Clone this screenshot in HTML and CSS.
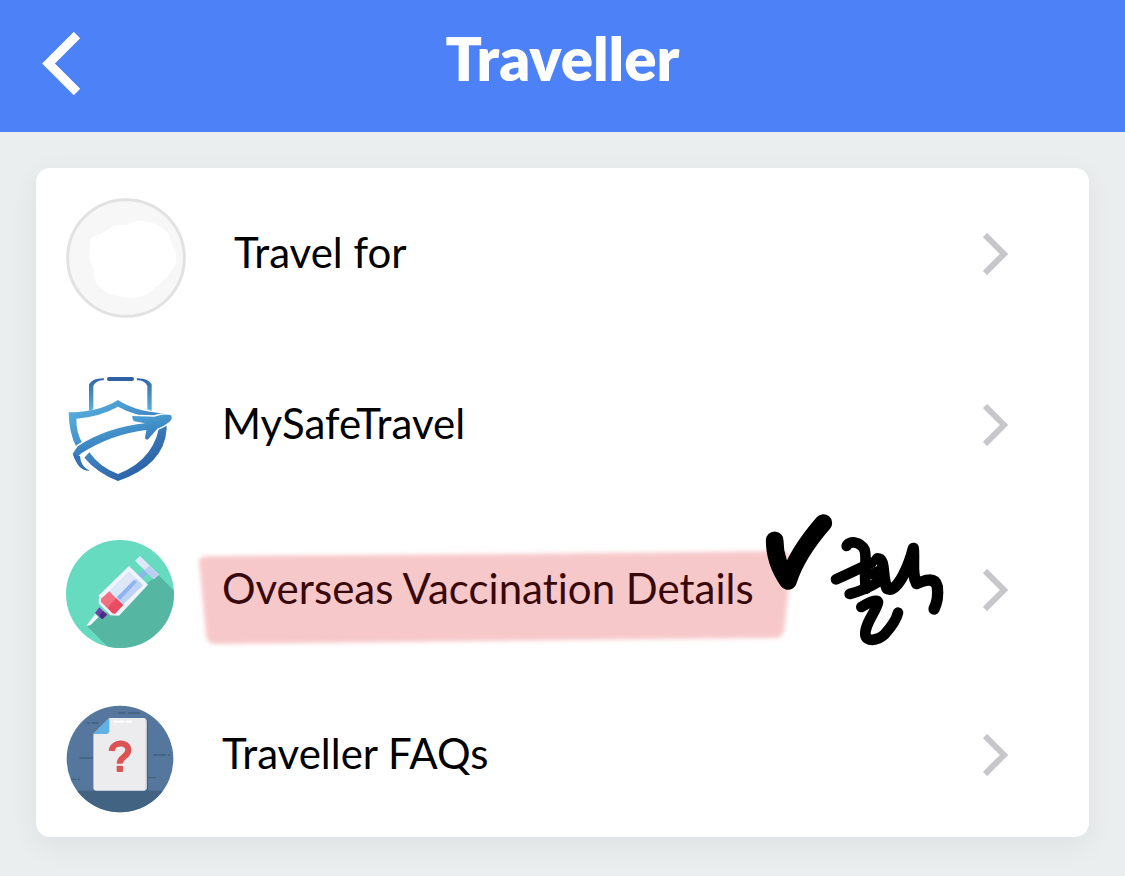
FILE: index.html
```html
<!DOCTYPE html>
<html lang="en">
<head>
  <meta charset="UTF-8">
  <meta name="viewport" content="width=device-width, initial-scale=1">
  <title>Traveller</title>
  <link rel="stylesheet" href="styles.css">
</head>
<body>

  <header class="topbar">
    <button class="back" type="button" aria-label="Back">
      <svg width="40" height="64" viewBox="0 0 40 64">
        <path d="M35 3L6.500 31.500L35 60" fill="none" stroke="#fff" stroke-width="9"/>
      </svg>
    </button>
    <h1 class="title">Traveller</h1>
  </header>

  <main class="content">
    <nav class="card">

      <a class="row" href="#">
        <svg class="icon icon-large" viewBox="48 54 360 360">
          <circle cx="228" cy="234" r="175" fill="#f7f7f7" stroke="#e2e2e2" stroke-width="9"/>
          <path d="M120 184Q125 166 149 163Q166 154 185 140Q205 131 227 136Q240 125 270 123Q325 124 357 164Q365 180 365 192Q380 207 379 248Q374 264 362 274Q351 300 320 318Q301 346 260 353Q230 355 205 348Q165 345 138 309Q130 290 131 267Q120 256 118 230Z" fill="#fff"/>
        </svg>
        <span class="label">Travel for</span>
        <svg class="chevron" viewBox="0 0 26 42"><path d="M2 2L21 21L2 40"/></svg>
      </a>

      <a class="row" href="#">
        <svg class="icon" viewBox="48 45 324 324">
          <defs>
            <linearGradient id="shield" gradientUnits="userSpaceOnUse" x1="100" y1="130" x2="230" y2="360">
              <stop offset="0" stop-color="#55aedd"/>
              <stop offset="1" stop-color="#2c62a8"/>
            </linearGradient>
            <linearGradient id="handle" gradientUnits="userSpaceOnUse" x1="0" y1="52" x2="0" y2="155">
              <stop offset="0" stop-color="#2f62a5"/>
              <stop offset="1" stop-color="#58b4e2"/>
            </linearGradient>
            <linearGradient id="plane" gradientUnits="userSpaceOnUse" x1="200" y1="165" x2="230" y2="290">
              <stop offset="0" stop-color="#4fa8d9"/>
              <stop offset="1" stop-color="#2f6bb0"/>
            </linearGradient>
          </defs>
          <!-- suitcase handle -->
          <rect x="171" y="51" width="81" height="12" rx="6" fill="#2f60a3"/>
          <path d="M117 153V73Q128 54 162 55L161 61Q137 61 130 78V147Z" fill="url(#handle)"/>
          <path d="M305 153V73Q294 54 260 55L261 61Q285 61 292 78V148Z" fill="url(#handle)"/>
          <!-- shield -->
          <path d="M56 157Q145 157 204 120Q260 157 348 160L350 207Q343 315 204 363Q140 338 103 293L118 277Q150 323 204 342Q322 296 331 174Q260 171 204 140Q147 171 79 176Q78 217 98 251L79 261Q57 220 56 157Z" fill="url(#shield)"/>
          <!-- plane and its trail -->
          <path d="M68 281L83 259Q170 202 285 190L253 184Q246 180 247 168L313 170Q342 160 362 165Q370 174 359 185Q342 199 322 206L297 235Q292 243 285 235L289 210Q185 222 94 280Q82 288 78 300Q72 294 68 281Z" fill="url(#plane)" stroke="#fff" stroke-width="9" paint-order="stroke"/>
          <path d="M70 284Q85 334 119 332Q92 320 90 288Z" fill="#3470b4"/>
        </svg>
        <span class="label">MySafeTravel</span>
        <svg class="chevron" viewBox="0 0 26 42"><path d="M2 2L21 21L2 40"/></svg>
      </a>

      <a class="row" href="#">
        <svg class="icon" viewBox="48 45 324 324">
          <clipPath id="disc"><circle cx="210" cy="207" r="162"/></clipPath>
          <g clip-path="url(#disc)">
            <rect x="48" y="45" width="324" height="324" fill="#66dbc0"/>
            <path d="M110 302L325 150L400 225V400H208Z" fill="#55b7a1"/>
          </g>
          <path d="M283 133L293 143L270 168L259 158Z" fill="#8fb5ec"/>
          <path d="M270 93L327 149L311 163L255 107Z" fill="#dfe7fa"/>
          <path d="M299 122L327 149L311 163L283 135Z" fill="#bccff2"/>
          <path d="M237 123L294 179L207 272L181 271L146 235L147 211Z" fill="#f0f4fd"/>
          <path d="M237 139L258 160L198 220L177 199Z" fill="#dce8f7"/>
          <path d="M258 160L279 181L217 241L197 220Z" fill="#bdd3f3"/>
          <path d="M252 164L260 172L210 225L201 216Z" fill="#8fb3ee"/>
          <path d="M178 199L198 220L171 249L153 231V221Z" fill="#ef7181"/>
          <path d="M198 219L220 240L195 267L187 265L171 248Z" fill="#e94c60"/>
          <path d="M148 247L171 269L157 283L135 264Z" fill="#6e43a4"/>
          <path d="M159 258L171 269L157 283L147 273Z" fill="#4e278b"/>
          <path d="M136 267L145 277L121 301L109 302Z" fill="#f4faff"/>
        </svg>
        <span class="label">Overseas Vaccination Details</span>
        <svg class="chevron" viewBox="0 0 26 42"><path d="M2 2L21 21L2 40"/></svg>

        <!-- marker and pen notes drawn over the row -->
        <svg class="marker" viewBox="0 0 610 110">
          <path d="M9 20Q10 16 20 16L310 14L592 11Q601 12 600 20L598 55L594 91Q592 98 585 98L300 101L25 104Q17 104 16 95Z"/>
        </svg>
        <svg class="pen" viewBox="0 0 870 480" role="img" aria-label="클릭">
          <path stroke-width="53" d="M104 121C104 170 121 210 144 243C164 180 210 115 250 69"/>
          <path stroke-width="32" d="M320 138C326 122 360 122 374 150C382 180 370 225 378 266"/>
          <path stroke-width="32" d="M288 238C325 222 360 205 395 188"/>
          <path stroke-width="32" d="M329 282C355 275 385 264 414 246"/>
          <path stroke-width="32" d="M396 222L414 214"/>
          <path stroke-width="34" d="M412 176C438 176 424 225 441 266C475 281 510 185 520 145C524 190 514 222 530 251C550 242 585 228 592 260C595 287 593 306 582 327"/>
          <path stroke-width="32" d="M364 321C381 310 411 295 414 306C412 330 373 370 376 405C379 426 412 423 433 404C453 382 469 361 474 338"/>
        </svg>
      </a>

      <a class="row" href="#">
        <svg class="icon" viewBox="48 45 324 324">
          <clipPath id="faq"><circle cx="210" cy="207" r="160"/></clipPath>
          <g clip-path="url(#faq)">
            <rect x="48" y="45" width="324" height="324" fill="#55779d"/>
            <rect x="48" y="302" width="324" height="70" fill="#426482"/>
            <path d="M204 69H226M233 69H270M109 99H119M124 99H145M88 204H130M309 195H348M353 195H360M292 263H317M63 268H80M84 268H91" fill="none" stroke="#41627f" stroke-width="4"/>
          </g>
          <path d="M178 85H284Q294 86 294 96V295Q293 303 285 303H139Q130 302 130 294V133Z" fill="#3f5f7e"/>
          <path d="M178 84H281Q290 85 290 94V294Q289 302 281 302H139Q130 301 130 293V132Z" fill="#ececee"/>
          <path d="M285 86Q290 88 290 94V294Q289 301 282 302Q286 298 286 292V95Z" fill="#d5d7da"/>
          <path d="M190 95H223M228 95H246" stroke="#fff" stroke-width="5"/>
          <path d="M178 84V124Q177 132 170 132H130Z" fill="#60b1e5"/>
          <path d="M185 183C187 154 235 153 235 180C234 202 209 200 209 221" fill="none" stroke="#dc5354" stroke-width="18"/>
          <rect x="200" y="227" width="19" height="19" rx="3" fill="#dc5354"/>
        </svg>
        <span class="label">Traveller FAQs</span>
        <svg class="chevron" viewBox="0 0 26 42"><path d="M2 2L21 21L2 40"/></svg>
      </a>

    </nav>
  </main>

</body>
</html>
```
FILE: styles.css
```css
* {
  margin: 0;
  padding: 0;
  box-sizing: border-box;
}

body {
  font-family: Avenir, Lato, sans-serif;
  font-variant-ligatures: none;
  background: #eaeeef;
  color: #000;
  min-height: 100vh;
}

.topbar {
  display: grid;
  grid-template-columns: 40px 1fr 40px;
  align-items: start;
  height: 132px;
  padding: 24px 42px;
  background: #4c81f7;
  color: #fff;
}

.back {
  height: 72px;
  padding-top: 7px;
  border: none;
  background: none;
  cursor: pointer;
}

.back svg {
  display: block;
}

.title {
  font-size: 60px;
  line-height: 68px;
  font-weight: 800;
  text-align: center;
}

.content {
  padding: 36px;
}

.card {
  display: flex;
  flex-direction: column;
  gap: 57px;
  padding: 30px 80px 24px 30px;
  background: #fff;
  border-radius: 14px;
  box-shadow: 0 8px 30px rgba(0, 0, 0, 0.06);
}

.row {
  position: relative;
  display: flex;
  align-items: center;
  gap: 48px;
  color: inherit;
  text-decoration: none;
}

.icon {
  flex: none;
  width: 108px;
  height: 108px;
}

.icon-large {
  width: 120px;
  height: 120px;
}

.label {
  flex: 1;
  padding-bottom: 12px;
  font-size: 42px;
  line-height: 52px;
}

.chevron {
  flex: none;
  width: 26px;
  height: 50px;
  padding-bottom: 8px;
  fill: none;
  stroke: #c7c7cb;
  stroke-width: 6;
}

/* hand-drawn notes */
.marker,
.pen {
  position: absolute;
  pointer-events: none;
}

.marker {
  left: 124px;
  top: 0;
  width: 610px;
  height: 110px;
  fill: rgba(223, 35, 43, 0.25);
  filter: blur(2px);
}

.pen {
  left: 674px;
  top: -40px;
  width: 290px;
  height: 160px;
  fill: none;
  stroke: #000;
  stroke-linecap: round;
  stroke-linejoin: round;
}
```
